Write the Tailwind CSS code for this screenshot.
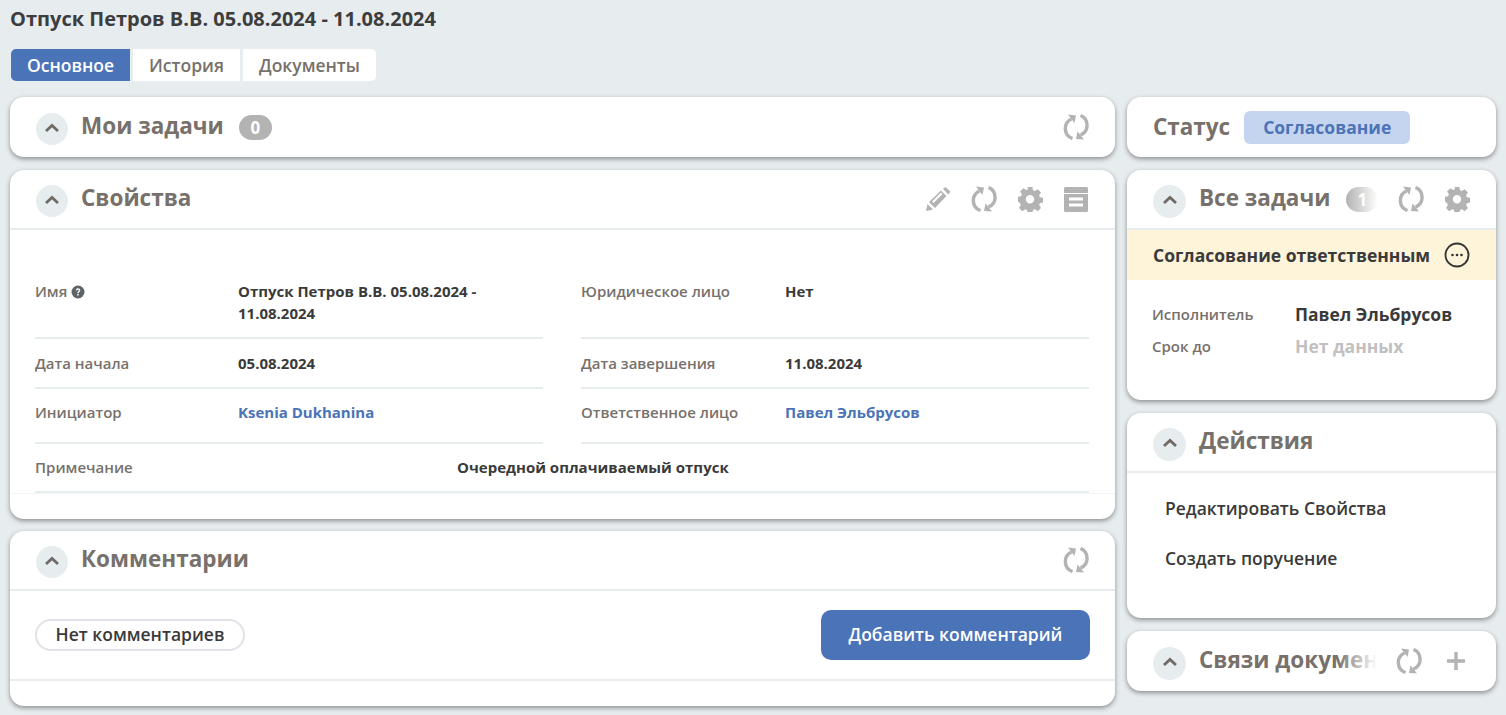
<!DOCTYPE html>
<html lang="ru"><head><meta charset="utf-8"><script src="https://cdn.jsdelivr.net/npm/@tailwindcss/browser@4"></script></head>
<body class="m-0 h-[715px] w-[1506px] overflow-hidden bg-[#e7ecef] font-['Open_Sans',sans-serif] text-[#3a3a3a]">
<svg class="hidden"><defs>
<symbol id="chev" viewBox="0 0 32 32"><path d="M10 18 16 12.500 22 18" fill="none" stroke="#6f6a66" stroke-width="2.800" /></symbol>
<symbol id="ref" viewBox="0 0 26 26"><path d="M8.500 5A10.500 10.500 0 0 0 9.500 24.500" fill="none" stroke="currentColor" stroke-width="3.400"/><path d="M5 .5 13 1.500 11.500 9Z" fill="currentColor"/><path d="M17.500 1.500A10.500 10.500 0 0 1 17.500 21" fill="none" stroke="currentColor" stroke-width="3.400"/><path d="M21 25.500 13 25 14.500 17.500Z" fill="currentColor"/></symbol>
<symbol id="gear" viewBox="0 0 26 26"><path fill="currentColor" fill-rule="evenodd" d="M10.600 1h4.800l.6 3.300 1.900.8 2.800-1.900 3.300 3.300-1.900 2.800.8 1.900 3.100.6v4.800l-3.100.6-.8 1.900 1.900 2.800-3.300 3.300-2.800-1.900-1.900.8-.6 3.100h-4.800l-.6-3.100-1.900-.8-2.800 1.900-3.300-3.300 1.900-2.800-.8-1.900L1 15.600v-4.800l3.100-.6.800-1.900-1.900-2.800 3.300-3.300L9.100 4.100l1.900-.8ZM13 9a4.200 4.200 0 1 0 0 8.400A4.200 4.200 0 0 0 13 9Z"/></symbol>
</defs></svg>

<div class="px-[10px] pt-[5px]">
  <h1 class="m-0 h-[29px] text-[20px] leading-[28px] font-bold text-[#3d3d3d]">Отпуск Петров В.В. 05.08.2024 - 11.08.2024</h1>
  <div class="mt-[15px] ml-px flex h-8 gap-[3px] text-[17.500px] leading-8 font-semibold">
    <div class="w-[119px] rounded-l-[5px] bg-[#4b73b7] text-center text-white">Основное</div>
    <div class="w-[107px] bg-white text-center text-[#77706b]">История</div>
    <div class="w-[133px] rounded-r-[5px] bg-white text-center text-[#77706b]">Документы</div>
  </div>

  <div class="mt-4 flex gap-3">
    <div class="flex w-[1105px] flex-col gap-[13px]">
      <section class="flex h-[60px] items-center rounded-[14px] bg-white pr-[26px] pl-[26px] shadow-[0_2px_5px_rgba(0,0,0,0.4)]">
        <span class="flex size-8 translate-y-[2px] items-center justify-center rounded-full bg-[#e7ecef]"><svg class="size-8"><use href="#chev"/></svg></span>
        <span class="ml-[13px] -translate-y-px text-[22.500px] leading-8 font-bold text-[#77706b]">Мои задачи</span>
        <span class="ml-[15px] h-[25px] w-[33px] rounded-full bg-[#b3b3b3] text-center text-[17px] leading-[25px] font-bold text-white">0</span>
        <svg class="ml-auto size-[26px] text-[#b3b3b3]"><use href="#ref"/></svg>
      </section>

      <section class="h-[349px] rounded-[14px] bg-white shadow-[0_2px_5px_rgba(0,0,0,0.4)]">
        <div class="flex h-[60px] items-center border-b-2 border-[#e7ecef] pr-[26px] pl-[26px]">
          <span class="flex size-8 translate-y-[2px] items-center justify-center rounded-full bg-[#e7ecef]"><svg class="size-8"><use href="#chev"/></svg></span>
          <span class="ml-[13px] -translate-y-px text-[22.500px] leading-8 font-bold text-[#77706b]">Свойства</span>
          <div class="ml-auto flex items-center gap-[20px] text-[#b3b3b3]">
            <svg class="size-[26px]" viewBox="0 0 26 26" fill="currentColor"><path d="M1 25l1.500-7 5.500 5.500Z"/><path d="M4 16 16 4.500l5.500 5.500L10 22Zm3-.5 1.500 1.500 9-9L16 6.500Z" fill-rule="evenodd"/><path d="M18 2.800 20.500 1l5 4.800-2.200 2.600Z"/></svg>
            <svg class="size-[26px]"><use href="#ref"/></svg>
            <svg class="size-[26px]"><use href="#gear"/></svg>
            <svg class="size-[26px]" viewBox="0 0 26 26" fill="currentColor"><path fill-rule="evenodd" d="M1 2.500A1.500 1.500 0 0 1 2.500 1h21A1.500 1.500 0 0 1 25 2.500V7H1ZM1 8h24v16.500a1.500 1.500 0 0 1-1.500 1.500h-21A1.500 1.500 0 0 1 1 24.500Zm5 3.500v3h14v-3Zm0 6v3h14v-3Z"/></svg>
          </div>
        </div>
        <div class="border-b border-[#f1f3f5] pt-[51px]">
          <div class="grid grid-cols-[508px_508px] gap-x-[38px] px-[25px] text-[15px] leading-[22px]">
            <div class="flex h-[61px] border-b-2 border-[#e7ecef] pt-[2px] -mt-[3px]"><span class="w-[203px] font-semibold text-[#77706b]">Имя <svg class="mb-[2px] inline size-[14px]" viewBox="0 0 14 14"><circle cx="7" cy="7" r="6.500" fill="#5f6368"/><path d="M4.800 5.300C5 3.800 6 3.300 7.100 3.300c1.300 0 2.200.8 2.200 1.900 0 1.600-1.700 1.600-1.700 3H6.300c0-2 1.600-1.900 1.600-3 0-.4-.3-.7-.8-.7-.6 0-.9.300-1 .9Z" fill="#fff"/><rect x="6.200" y="9" width="1.500" height="1.500" fill="#fff"/></svg></span><span class="w-[260px] font-bold">Отпуск Петров В.В. 05.08.2024 - 11.08.2024</span></div>
            <div class="flex h-[61px] border-b-2 border-[#e7ecef] pt-[2px] -mt-[3px]"><span class="w-[204px] font-semibold text-[#77706b]">Юридическое лицо</span><span class="font-bold">Нет</span></div>
            <div class="flex h-[50px] border-b-2 border-[#e7ecef] pt-[13px]"><span class="w-[203px] font-semibold text-[#77706b]">Дата начала</span><span class="font-bold">05.08.2024</span></div>
            <div class="flex h-[50px] border-b-2 border-[#e7ecef] pt-[13px]"><span class="w-[204px] font-semibold text-[#77706b]">Дата завершения</span><span class="font-bold">11.08.2024</span></div>
            <div class="flex h-[55px] border-b-2 border-[#e7ecef] pt-[12px]"><span class="w-[203px] font-semibold text-[#77706b]">Инициатор</span><span class="font-bold text-[#4b73b7]">Ksenia Dukhanina</span></div>
            <div class="flex h-[55px] border-b-2 border-[#e7ecef] pt-[12px]"><span class="w-[204px] font-semibold text-[#77706b]">Ответственное лицо</span><span class="font-bold text-[#4b73b7]">Павел Эльбрусов</span></div>
            <div class="col-span-2 flex h-[49px] border-b-2 border-[#e7ecef] pt-[12px]"><span class="w-[422px] font-semibold text-[#77706b]">Примечание</span><span class="font-bold">Очередной оплачиваемый отпуск</span></div>
          </div>
        </div>
      </section>

      <section class="-mt-px h-[175px] rounded-[14px] bg-white shadow-[0_2px_5px_rgba(0,0,0,0.4)]">
        <div class="flex h-[60px] items-center border-b-2 border-[#e7ecef] pr-[26px] pl-[26px]">
          <span class="flex size-8 translate-y-[2px] items-center justify-center rounded-full bg-[#e7ecef]"><svg class="size-8"><use href="#chev"/></svg></span>
          <span class="ml-[13px] -translate-y-px text-[22.500px] leading-8 font-bold text-[#77706b]">Комментарии</span>
          <svg class="ml-auto size-[26px] text-[#b3b3b3]"><use href="#ref"/></svg>
        </div>
        <div class="flex h-[90px] items-center justify-between border-b-2 border-[#e7ecef] px-[25px] leading-[22px]">
          <span class="flex h-8 w-[210px] items-center justify-center rounded-full border-2 border-[#dfe3e7] pb-[2px] text-[17.500px] font-semibold">Нет комментариев</span>
          <span class="flex h-[50px] w-[269px] items-center justify-center rounded-[10px] bg-[#4b73b7] pb-[2px] text-[17.500px] font-semibold text-white">Добавить комментарий</span>
        </div>
      </section>
    </div>

    <div class="flex w-[369px] flex-col gap-[13px]">
      <section class="flex h-[60px] items-center rounded-[14px] bg-white pl-[26px] shadow-[0_2px_5px_rgba(0,0,0,0.4)]">
        <span class="text-[22.500px] leading-8 font-bold text-[#77706b]">Статус</span>
        <span class="ml-[14px] h-[33px] w-[166px] rounded-[6px] bg-[#c6d5ef] text-center text-[17.500px] leading-[33px] font-bold text-[#4b73b7]">Согласование</span>
      </section>

      <section class="h-[230px] overflow-hidden rounded-[14px] bg-white shadow-[0_2px_5px_rgba(0,0,0,0.4)]">
        <div class="flex h-[60px] items-center border-b-2 border-[#e7ecef] pr-[26px] pl-[26px]">
          <span class="flex size-[33px] shrink-0 translate-y-[2px] items-center justify-center rounded-full bg-[#e7ecef]"><svg class="size-8"><use href="#chev"/></svg></span>
          <span class="ml-[13px] -translate-y-px text-[22.500px] leading-8 font-bold whitespace-nowrap text-[#77706b]">Все задачи</span>
          <span class="ml-4 h-[25px] w-[32px] shrink-0 rounded-full bg-linear-to-r from-[#b3b3b3] to-white text-center text-[17px] leading-[25px] font-bold text-white">1</span>
          <svg class="ml-[20px] size-[26px] shrink-0 text-[#b3b3b3]"><use href="#ref"/></svg>
          <svg class="ml-[20px] size-[26px] shrink-0 text-[#b3b3b3]"><use href="#gear"/></svg>
        </div>
        <div class="flex h-[50px] items-center bg-[#fef4da] pr-[26px] pl-[26px]">
          <span class="text-[17.500px] font-bold text-[#3a3a3a]">Согласование ответственным</span>
          <svg class="ml-auto size-[26px]" viewBox="0 0 26 26"><circle cx="13" cy="13" r="11.500" fill="none" stroke="#333" stroke-width="1.800"/><circle cx="8.500" cy="13" r="1.300" fill="#333"/><circle cx="13" cy="13" r="1.300" fill="#333"/><circle cx="17.500" cy="13" r="1.300" fill="#333"/></svg>
        </div>
        <div class="grid grid-cols-[143px_1fr] gap-y-[10px] pt-[23px] pl-[25px] leading-[22px]">
          <span class="text-[15px] font-semibold text-[#77706b]">Исполнитель</span><span class="text-[17.500px] font-bold">Павел Эльбрусов</span>
          <span class="text-[15px] font-semibold text-[#77706b]">Срок до</span><span class="text-[17.500px] font-bold text-[#c0c0c0]">Нет данных</span>
        </div>
      </section>

      <section class="h-[205px] rounded-[14px] bg-white shadow-[0_2px_5px_rgba(0,0,0,0.4)]">
        <div class="flex h-[60px] items-center border-b-2 border-[#e7ecef] pl-[26px]">
          <span class="flex size-[33px] translate-y-[2px] items-center justify-center rounded-full bg-[#e7ecef]"><svg class="size-8"><use href="#chev"/></svg></span>
          <span class="ml-[13px] -translate-y-px text-[22.500px] leading-8 font-bold text-[#77706b]">Действия</span>
        </div>
        <div class="pt-[21px] pl-[38px] text-[17.500px] font-semibold">
          <div class="h-[50px] leading-[28px]">Редактировать Свойства</div>
          <div class="leading-[28px]">Создать поручение</div>
        </div>
      </section>

      <section class="flex h-[60px] items-center rounded-[14px] bg-white pl-[26px] shadow-[0_2px_5px_rgba(0,0,0,0.4)]">
        <span class="flex size-[33px] shrink-0 translate-y-[2px] items-center justify-center rounded-full bg-[#e7ecef]"><svg class="size-8"><use href="#chev"/></svg></span>
        <span class="relative ml-[13px] w-[178px] shrink-0 -translate-y-px overflow-hidden text-[22.500px] leading-8 font-bold whitespace-nowrap text-[#77706b]">Связи документов<span class="absolute top-0 right-0 h-full w-[40px] bg-linear-to-r from-white/0 to-white"></span></span>
        <svg class="ml-[19px] size-[26px] shrink-0 text-[#b3b3b3]"><use href="#ref"/></svg>
        <svg class="ml-[25px] size-[18px] shrink-0 text-[#b3b3b3]" viewBox="0 0 18 18"><path d="M9 0v18M0 9h18" stroke="currentColor" stroke-width="3.400" fill="none"/></svg>
      </section>
    </div>
  </div>
</div>
</body></html>
